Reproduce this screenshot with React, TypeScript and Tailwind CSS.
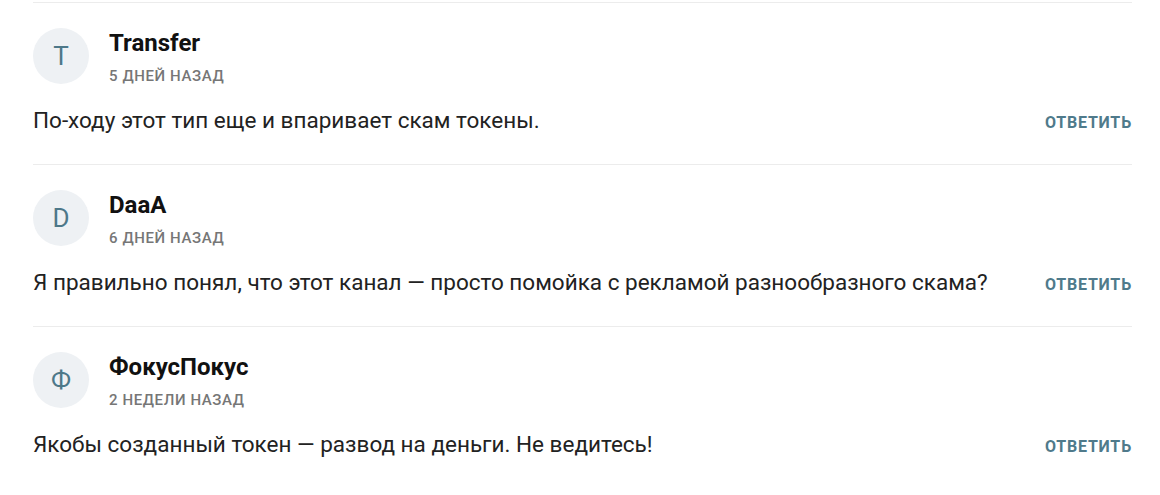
import React from 'react';

interface Comment {
    author: string;
    initial: string;
    when: string;
    text: string;
}

const comments: Comment[] = [
    { author: 'Transfer', initial: 'T', when: '5 дней назад', text: 'По-ходу этот тип еще и впаривает скам токены.' },
    { author: 'DaaA', initial: 'D', when: '6 дней назад', text: 'Я правильно понял, что этот канал — просто помойка с рекламой разнообразного скама?' },
    { author: 'ФокусПокус', initial: 'Ф', when: '2 недели назад', text: 'Якобы созданный токен — развод на деньги. Не ведитесь!' },
];

const CommentRow: React.FC<{ c: Comment }> = ({ c }) => (
    <div className="border-t border-[#ececec] pt-[25px] pb-[29px]">
        {/* Author */}
        <div className="flex items-start gap-5 h-14">
            <div className="w-14 h-14 rounded-full bg-[#eef1f4] flex items-center justify-center text-[26px] text-[#4d7889] shrink-0">
                {c.initial}
            </div>
            <div className="flex flex-col mt-[1px]">
                <span className="text-[24px] leading-[28px] font-bold text-[#111]">{c.author}</span>
                <span className="text-[15px] leading-[20px] font-medium uppercase tracking-[0.6px] text-[#767676] mt-[9px]">
                    {c.when}
                </span>
            </div>
        </div>

        {/* Body */}
        <div className="flex items-center justify-between h-7 mt-[23px]">
            <p className="text-[22.5px] leading-[28px] text-[#222] -translate-y-px">{c.text}</p>
            <button className="text-[16px] leading-[24px] font-bold uppercase tracking-[0.8px] text-[#4f7a8b] pt-[3px]">
                Ответить
            </button>
        </div>
    </div>
);

export default function App() {
    return (
        <div className="w-[1160px] h-[495px] bg-white pt-[2px]" style={{ fontFamily: 'Roboto, "Noto Sans", sans-serif' }}>
            <div className="ml-[33px] w-[1099px]">
                {comments.map((c) => (
                    <CommentRow key={c.author} c={c} />
                ))}
            </div>
        </div>
    );
}
